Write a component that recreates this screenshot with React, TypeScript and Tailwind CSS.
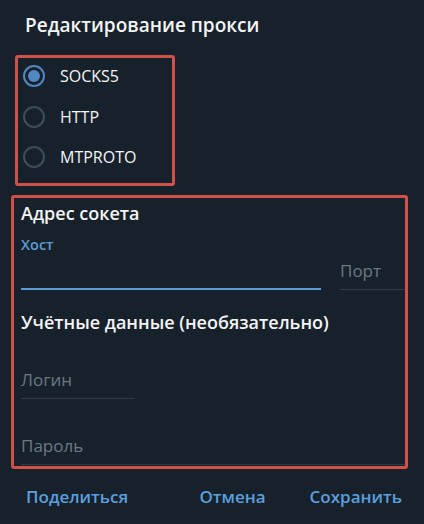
const font = { fontFamily: '"Open Sans", "Noto Sans", sans-serif' };

function Radio({ label, checked }: { label: string; checked?: boolean }) {
  return (
    <div className="flex items-center h-[40.5px]">
      <div
        className={`ml-[5px] w-[22px] h-[22px] rounded-full border-[2px] flex items-center justify-center ${
          checked ? 'border-[#5288c1]' : 'border-[#404c5a]'
        }`}
      >
        {checked && <div className="w-[12px] h-[12px] rounded-full bg-[#5288c1]" />}
      </div>
      <span className="ml-[15px] text-[16px] text-[#f5f5f5]">{label}</span>
    </div>
  );
}

export default function App() {
  return (
    <div className="w-[424px] h-[524px] bg-[#17212b] flex flex-col overflow-hidden" style={font}>
      <h1 className="ml-[25px] mt-[10px] h-[30px] leading-[30px] text-[19px] font-semibold text-[#f5f5f5]">
        Редактирование прокси
      </h1>

      <div className="ml-[15px] mt-[15px] w-[160px] h-[131px] border-[3px] border-[#d0504a] rounded-[3px] pt-[-1px] flex flex-col">
        <div className="-mt-[2px]">
          <Radio label="SOCKS5" checked />
          <Radio label="HTTP" />
          <Radio label="MTPROTO" />
        </div>
      </div>

      <div className="ml-[11px] mt-[9px] w-[397px] h-[274px] border-[3px] border-[#d0504a] rounded-[3px] pl-[7px] flex flex-col overflow-hidden">
        <div className="mt-[3px] h-[24px] leading-[24px] text-[18px] font-semibold text-[#f5f5f5]">
          Адрес сокета
        </div>
        <div className="flex items-end gap-[19px]">
          <div className="flex flex-col w-[300px]">
            <div className="mt-[10px] h-[20px] leading-[20px] text-[14.5px] font-semibold text-[#5b9bd5]">Хост</div>
            <div className="h-[35px] border-b-[2px] border-[#5b9bd5]" />
          </div>
          <div className="flex-1 h-[38px] flex items-center text-[17px] text-[#6c7883] border-b border-[#2f3b47]">
            Порт
          </div>
        </div>
        <div className="mt-[20px] h-[24px] leading-[24px] text-[18px] font-semibold text-[#f5f5f5]">
          Учётные данные (необязательно)
        </div>
        <div className="mt-[27px] w-[114px] h-[38px] flex items-center text-[17px] text-[#6c7883] border-b border-[#2f3b47]">
          Логин
        </div>
        <div className="mt-[28px] h-[38px] flex items-center text-[17px] text-[#6c7883] border-b border-[#2f3b47]">
          Пароль
        </div>
      </div>

      <div className="flex items-center h-[55px] text-[17px] font-semibold text-[#5a9fdc]">
        <span className="ml-[26px]">Поделиться</span>
        <span className="ml-auto">Отмена</span>
        <span className="ml-[44px] mr-[22px]">Сохранить</span>
      </div>
    </div>
  );
}
